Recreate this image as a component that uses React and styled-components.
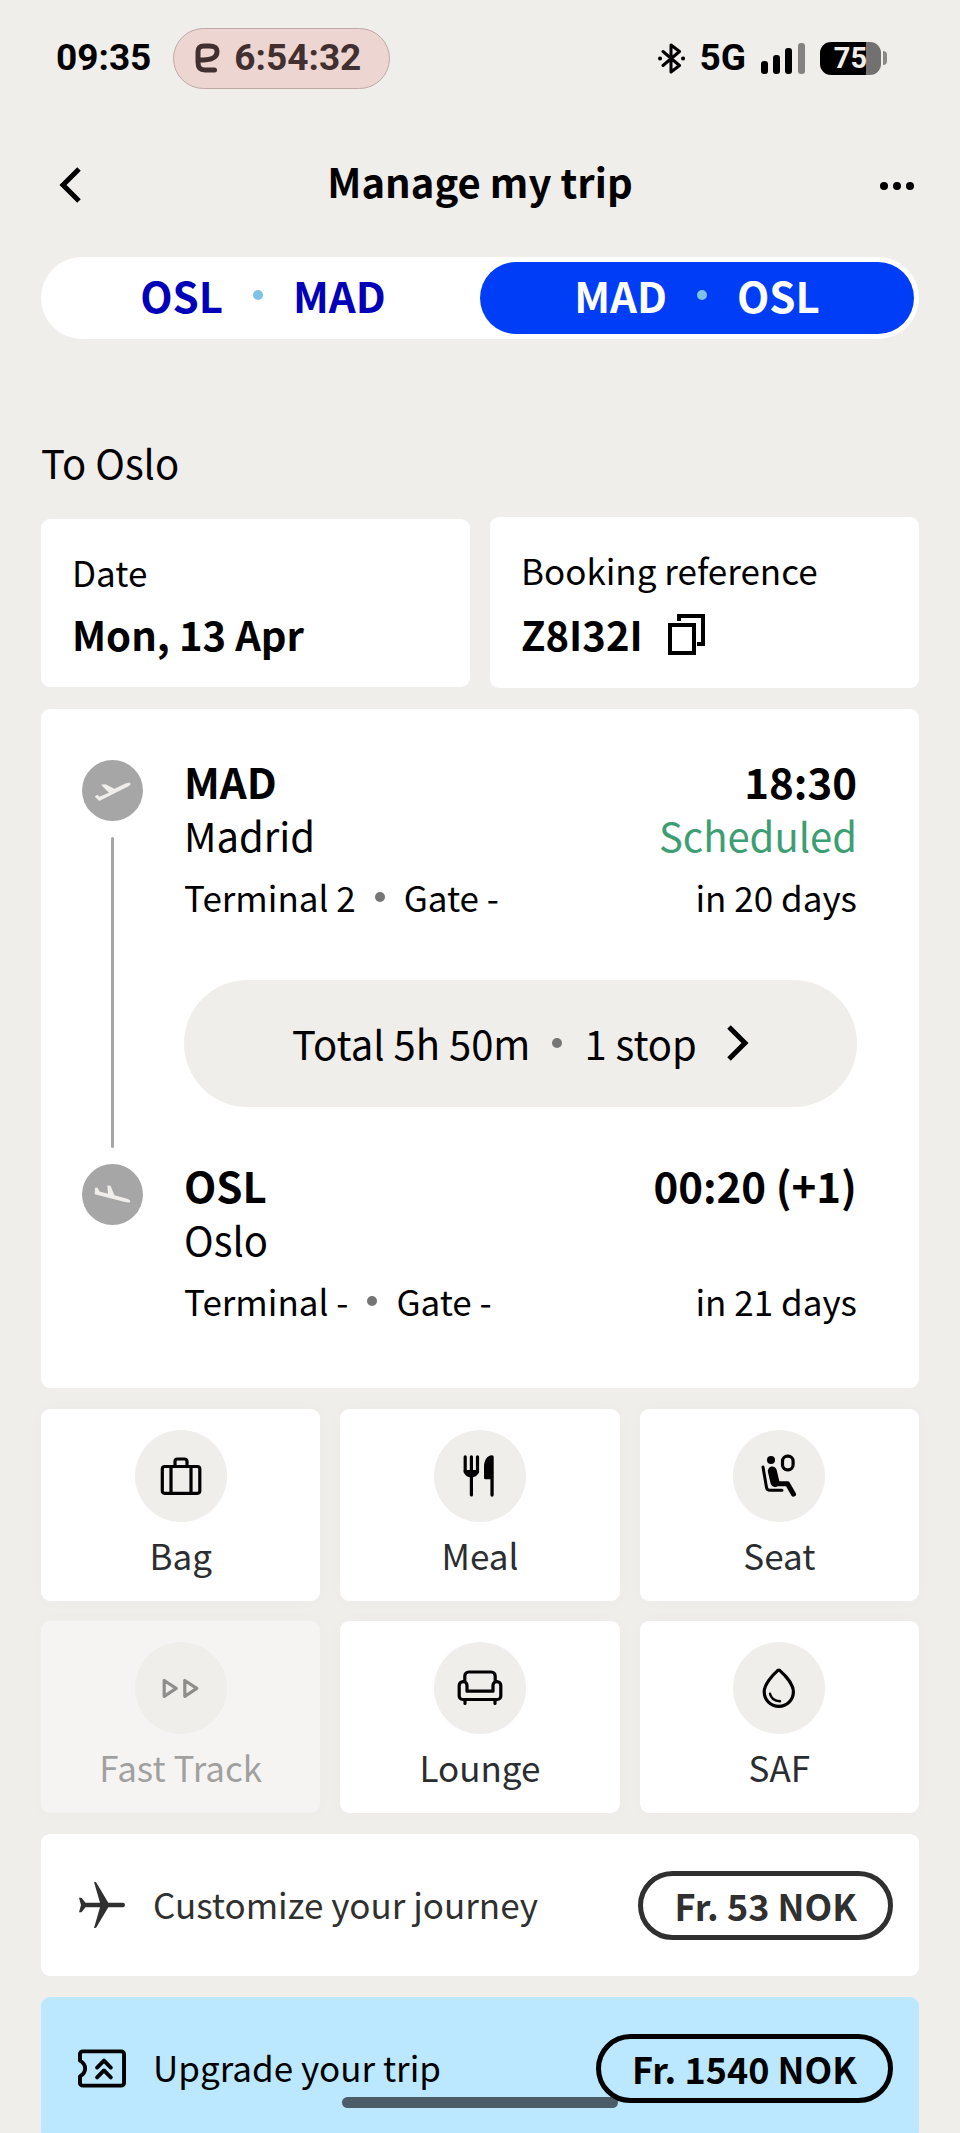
import React, { useState } from "react"
import styled, { createGlobalStyle, css } from "styled-components"

const GlobalStyle = createGlobalStyle`
  *, *::before, *::after {
    box-sizing: border-box;
  }

  body {
    margin: 0;
    background: #f0eeeb;
    color: #000;
    font-family: "Noto Sans CJK SC", "Noto Sans", sans-serif;
    font-size: 35px;
    line-height: 48px;
  }

  h1, h2, p, dl, dd {
    margin: 0;
  }

  button {
    border: 0;
    padding: 0;
    background: none;
    color: inherit;
    font: inherit;
    cursor: pointer;
  }

  svg {
    display: block;
    flex: none;
  }
`

const tiles = [
  { label: "Bag", icon: BagIcon },
  { label: "Meal", icon: MealIcon },
  { label: "Seat", icon: SeatIcon },
  { label: "Fast Track", icon: FastTrackIcon, disabled: true },
  { label: "Lounge", icon: LoungeIcon },
  { label: "SAF", icon: DropIcon },
]

const legs = [
  { from: "OSL", to: "MAD" },
  { from: "MAD", to: "OSL" },
]

const App = () => {
  const [leg, setLeg] = useState(1)

  return (
    <Screen>
      <GlobalStyle />
      <StatusBar />
      <TopBar>
        <IconButton aria-label="Back">
          <svg width="48" height="36" viewBox="0 0 48 36" fill="none" stroke="currentColor" strokeWidth="5">
            <path d="M33 2 17 18l16 16" />
          </svg>
        </IconButton>
        <Title>Manage my trip</Title>
        <IconButton $end aria-label="More">
          <svg width="48" height="36" viewBox="0 0 48 36" fill="currentColor">
            <circle cx="18" cy="19" r="4" />
            <circle cx="31" cy="19" r="4" />
            <circle cx="44" cy="19" r="4" />
          </svg>
        </IconButton>
      </TopBar>

      <Content>
        <Tabs role="tablist">
          {legs.map((item, i) => (
            <Tab
              key={item.from}
              role="tab"
              aria-selected={leg === i}
              $active={leg === i}
              onClick={() => setLeg(i)}
            >
              {item.from}
              <Dot $color="#7dc3e8" />
              {item.to}
            </Tab>
          ))}
        </Tabs>

        <Heading>To Oslo</Heading>

        <Stack>
          <InfoRow>
            <InfoCard>
              <dt>Date</dt>
              <InfoValue>Mon, 13 Apr</InfoValue>
            </InfoCard>
            <InfoCard>
              <dt>Booking reference</dt>
              <InfoValue>
                Z8I32I
                <CopyButton aria-label="Copy booking reference">
                  <svg width="38" height="41" viewBox="0 0 38 41" fill="none" stroke="currentColor" strokeWidth="4">
                    <path d="M2 11h24v28H2z" />
                    <path d="M11 7V2h24v28h-6" />
                  </svg>
                </CopyButton>
              </InfoValue>
            </InfoCard>
          </InfoRow>

          <FlightCard>
            <Timeline>
              <Marker>
                <svg width="61" height="61" viewBox="0 0 61 61" fill="#f0eeeb">
                  <path d="M12.7 36.5 17.3 41 47 26q2.5-2 1-3.2-1.5-.5-4 .5l-11.5 5.4-9-4.5-4.5.5 8 8-9.5 4-2-2z" />
                </svg>
              </Marker>
              <Line />
              <Marker>
                <svg width="61" height="61" viewBox="0 0 61 61" fill="#f0eeeb">
                  <path d="m12.7 30.3.3-6.6 2.5.1 2 3.7 8.5 2.2-.7-8.1 3.2.1 4 9.6L46 35q3 1.5 2 3.3-1 .7-6-.5z" />
                </svg>
              </Marker>
            </Timeline>
            <Stops>
              <Stop
                code="MAD"
                city="Madrid"
                time="18:30"
                status="Scheduled"
                terminal="2"
                days="in 20 days"
              />
              <TotalButton>
                Total 5h 50m
                <Dot $color="#757575" />
                1 stop
                <Chevron width="22" height="36" viewBox="0 0 22 36" fill="none" stroke="currentColor" strokeWidth="5">
                  <path d="m2 2 16 16L2 34" />
                </Chevron>
              </TotalButton>
              <Stop
                code="OSL"
                city="Oslo"
                time="00:20 (+1)"
                terminal="-"
                days="in 21 days"
              />
            </Stops>
          </FlightCard>

          <TileGrid>
            {tiles.map(({ label, icon: Icon, disabled }) => (
              <Tile key={label} disabled={disabled}>
                <TileIcon>
                  <Icon />
                </TileIcon>
                {label}
              </Tile>
            ))}
          </TileGrid>

          <Offer href="#customize">
            <svg width="48" height="46" viewBox="0 0 48 46" fill="currentColor">
              <path d="M16 0h1.2q.8 0 1.2.7L30.3 20.7H44.7a2.3 2.3 0 0 1 0 4.6H30.3L18.4 45.3q-.4.7-1.2.7H16l6-20.7H7.5L3.5 30.3H1L3 23 1 15.7h2.5l4 5H22z" />
            </svg>
            <OfferText>Customize your journey</OfferText>
            <Price>Fr. 53 NOK</Price>
          </Offer>

          <Offer href="#upgrade" $highlight>
            <svg width="48" height="39" viewBox="0 0 49 39" fill="none" stroke="currentColor" strokeWidth="4" strokeLinejoin="round" strokeLinecap="round">
              <path d="M5 2h39a3 3 0 0 1 3 3v29a3 3 0 0 1-3 3H5a3 3 0 0 1-3-3v-6.500c7-4 7-12 0-16V5a3 3 0 0 1 3-3Z" />
              <path d="m19.5 18.500 7-7 7 7M19.5 28.500l7-7 7 7" />
            </svg>
            <OfferText>Upgrade your trip</OfferText>
            <Price>Fr. 1540 NOK</Price>
          </Offer>
        </Stack>
      </Content>
      <HomeIndicator />
    </Screen>
  )
}

const StatusBar = () => (
  <Status>
    <time>09:35</time>
    <Timer>
      <svg width="25" height="30" viewBox="0 0 25 30" fill="none" stroke="currentColor" strokeWidth="5" strokeLinecap="round">
        <path d="M4 17c5 0 10 0 13-1.5 4-1.5 5-4 5-7C22 4 19 3 14 3H9C4.5 3 3 5 3 9v10c0 5.5 2 8 7 8h9.5" />
      </svg>
      6:54:32
    </Timer>
    <StatusRight>
      <svg width="27" height="31" viewBox="0 0 27 31" fill="none" stroke="currentColor" strokeWidth="3" strokeLinejoin="round" strokeLinecap="round">
        <path d="m5 8.5 16.5 14L13 29V2l8.5 6.500-16.5 14" />
        <path d="M2 15.500h.1M25 15.500h.1" strokeWidth="4" />
      </svg>
      <span>5G</span>
      <svg width="44" height="31" viewBox="0 0 44 31" fill="currentColor">
        <rect x="0" y="18" width="7" height="13" rx="3" />
        <rect x="12" y="12" width="7" height="19" rx="3" />
        <rect x="24" y="5" width="7" height="26" rx="3" />
        <rect x="37" y="0" width="7" height="31" rx="3" opacity=".45" />
      </svg>
      <BatteryWrapper>
        <Battery>75</Battery>
        <BatteryTip />
      </BatteryWrapper>
    </StatusRight>
  </Status>
)

const Stop = ({ code, city, time, status, terminal, days }) => (
  <section>
    <StopRow $bold>
      <span>{code}</span>
      <time>{time}</time>
    </StopRow>
    <StopRow>
      <span>{city}</span>
      {status && <StopStatus>{status}</StopStatus>}
    </StopRow>
    <StopDetails>
      <span>Terminal {terminal}</span>
      <Dot $color="#757575" />
      <span>Gate -</span>
      <Days>{days}</Days>
    </StopDetails>
  </section>
)

function TileSvg({ children }) {
  return (
    <svg width="92" height="92" viewBox="0 0 92 92" fill="none" stroke="#000" strokeWidth="3.2" strokeLinecap="round" strokeLinejoin="round">
      {children}
    </svg>
  )
}

function BagIcon() {
  return (
    <TileSvg>
      <rect x="27.3" y="36.5" width="37.5" height="26.8" rx="2.5" />
      <path d="M36 37v26M56 37v26M40 36v-4.500a2.5 2.5 0 0 1 2.5-2.500h7a2.5 2.5 0 0 1 2.5 2.500V36" />
    </TileSvg>
  )
}

function MealIcon() {
  return (
    <TileSvg>
      <path d="M31.2 26.8V42M37.4 26.8V65M43.5 26.8V42" />
      <g fill="#000" stroke="none">
        <path d="M29.7 40H45c0 4.5-3 7.3-7.7 7.3S29.7 44.5 29.7 40Z" />
        <path d="M59.7 27v38a1.6 1.6 0 0 1-3.3 0V49.3h-4.9a1.5 1.5 0 0 1-1.5-1.500V37c0-6.5 3-11.7 8-11.7a1.7 1.7 0 0 1 1.7 1.7Z" />
      </g>
    </TileSvg>
  )
}

function SeatIcon() {
  return (
    <TileSvg>
      <circle cx="38" cy="30" r="4" fill="#000" stroke="none" />
      <path d="m30 37 3.5 20.500q.5 2.8 3.5 2.800h12" strokeWidth="3" />
      <path d="m39.3 41 2.7 11.500" strokeWidth="9" />
      <path d="M42 53.700h12.500l6 10.500" strokeWidth="5" />
      <rect x="49.5" y="26.2" width="10.6" height="13.6" rx="5" />
    </TileSvg>
  )
}

function FastTrackIcon() {
  return (
    <TileSvg>
      <path d="M29.2 38.5v15.8l12-7.9zM49.8 38.5v15.8l12-7.9z" />
    </TileSvg>
  )
}

function LoungeIcon() {
  return (
    <TileSvg>
      <path d="M30.8 39v-5a4 4 0 0 1 4-4h22.4a4 4 0 0 1 4 4v5M31 58v3.5M61 58v3.5" />
      <path d="M33 49.2h26v-5.7a3.9 3.9 0 0 1 7.8 0V54a3.5 3.5 0 0 1-3.5 3.500H28.7a3.5 3.5 0 0 1-3.5-3.500V43.5a3.9 3.9 0 0 1 7.8 0Z" />
    </TileSvg>
  )
}

function DropIcon() {
  return (
    <TileSvg>
      <path d="M44.6 28.6C39 33.5 31.2 42.5 31.2 49.8a14.6 14.6 0 0 0 29.2 0C60.4 42.5 52.5 33.5 46.9 28.6a1.8 1.8 0 0 0-2.3 0Z" />
      <path d="M37 51.7q1.5 7 10 7.6" strokeWidth="2.4" />
    </TileSvg>
  )
}

const Screen = styled.div`
  position: relative;
  height: 100vh;
  overflow: hidden;
  display: flex;
  flex-direction: column;
`

const Status = styled.div`
  display: flex;
  align-items: center;
  flex: none;
  height: 116px;
  padding: 0 73px 0 56px;
  font-family: Roboto, sans-serif;
  font-size: 37px;
  font-weight: 700;
`

const Timer = styled.div`
  display: flex;
  align-items: center;
  gap: 14px;
  height: 61px;
  margin-left: 22px;
  padding: 0 28px 0 21px;
  border: 1px solid #bfa9a7;
  border-radius: 31px;
  background: #edd5d1;
  color: #41302f;
`

const StatusRight = styled.div`
  display: flex;
  align-items: center;
  gap: 15px;
  margin-left: auto;
`

const BatteryWrapper = styled.div`
  display: flex;
  align-items: center;
  gap: 2px;
`

const Battery = styled.div`
  width: 61px;
  height: 33px;
  border-radius: 11px;
  background: linear-gradient(to right, #000 75%, #727170 75%);
  color: #f0eeeb;
  font-size: 29px;
  line-height: 33px;
  text-align: center;
`

const BatteryTip = styled.div`
  width: 4px;
  height: 14px;
  border-radius: 0 4px 4px 0;
  background: #8a8987;
`

const TopBar = styled.header`
  display: grid;
  grid-template-columns: 1fr auto 1fr;
  align-items: center;
  flex: none;
  margin: 38px 46px 0;
`

const Title = styled.h1`
  font-size: 40px;
  line-height: 54px;
  font-weight: 700;
`

const IconButton = styled.button`
  justify-self: ${p => (p.$end ? "end" : "start")};
  padding-top: 8px;
`

const Content = styled.main`
  flex: 1;
  min-height: 0;
  margin-top: 49px;
  padding: 0 41px;
  overflow: hidden;
`

const Tabs = styled.div`
  display: grid;
  grid-template-columns: 1fr 1fr;
  height: 82px;
  padding: 5px;
  border-radius: 41px;
  background: #fff;
`

const Dot = styled.span`
  flex: none;
  width: 10px;
  height: 10px;
  border-radius: 50%;
  background: ${p => p.$color};
`

const Tab = styled.button`
  display: flex;
  align-items: center;
  justify-content: center;
  gap: 30px;
  padding-bottom: 6px;
  border-radius: 36px;
  font-size: 42px;
  font-weight: 700;
  color: #0000b8;

  ${p => p.$active && css`
    background: #003df6;
    color: #fff;
  `}
`

const Heading = styled.h2`
  margin: 96px 0 28px;
  font-size: 40px;
  line-height: 54px;
  font-weight: 400;
`

const Stack = styled.div`
  display: flex;
  flex-direction: column;
  gap: 21px;
`

const card = css`
  border-radius: 9px;
  background: #fff;
`

const InfoRow = styled.div`
  display: grid;
  grid-template-columns: 1fr 1fr;
  align-items: center;
  gap: 20px;
`

const InfoCard = styled.dl`
  ${card}
  padding: 29px 30px 26px 31px;
`

const InfoValue = styled.dd`
  display: flex;
  align-items: center;
  gap: 25px;
  padding-top: 11px;
  font-size: 40px;
  line-height: 54px;
  font-weight: 700;
`

const CopyButton = styled.button`
  padding: 9px 0 7px;
`

const FlightCard = styled.article`
  ${card}
  display: flex;
  gap: 41px;
  padding: 45px 62px 63px 41px;
`

const Timeline = styled.div`
  display: flex;
  flex-direction: column;
  align-items: center;
  gap: 16px;
  padding: 6px 0 100px;
`

const Marker = styled.div`
  border-radius: 50%;
  background: #a6a6a6;
`

const Line = styled.div`
  flex: 1;
  width: 3px;
  border-radius: 2px;
  background: #a6a6a6;
`

const Stops = styled.div`
  flex: 1;
`

const StopRow = styled.div`
  display: flex;
  justify-content: space-between;
  font-size: ${p => (p.$bold ? 42 : 40)}px;
  line-height: 54px;
  font-weight: ${p => (p.$bold ? 700 : 400)};
`

const StopStatus = styled.span`
  color: #3d9e74;
`

const StopDetails = styled.div`
  display: flex;
  align-items: center;
  gap: 19px;
  margin-top: 11px;
`

const Days = styled.span`
  margin-left: auto;
`

const TotalButton = styled.button`
  display: flex;
  align-items: center;
  justify-content: center;
  gap: 22px;
  width: 100%;
  height: 127px;
  margin: 59px 0 51px;
  padding-bottom: 2px;
  border-radius: 64px;
  background: #f0eeeb;
  font-size: 40px;
`

const Chevron = styled.svg`
  margin-left: 8px;
`

const TileGrid = styled.div`
  display: grid;
  grid-template-columns: repeat(3, 1fr);
  gap: 20px;
`

const Tile = styled.button`
  ${card}
  display: flex;
  flex-direction: column;
  align-items: center;
  gap: 9px;
  height: 192px;
  padding-top: 21px;
  color: #2b2d30;
  box-shadow: 0 0 20px rgba(0, 0, 0, 0.02);

  &:disabled {
    opacity: 0.4;
    cursor: default;
  }
`

const TileIcon = styled.span`
  border-radius: 50%;
  background: #f0eeeb;
`

const Offer = styled.a`
  ${card}
  display: flex;
  align-items: center;
  height: 142px;
  padding: 0 26px 0 37px;
  color: #303030;
  text-decoration: none;

  ${p => p.$highlight && css`
    background: #bbe8ff;
    color: #000;
  `}
`

const OfferText = styled.span`
  flex: 1;
  margin-left: 27px;
  padding-bottom: 2px;
`

const Price = styled.span`
  padding: 5px 31px 6px;
  border: 5px solid currentColor;
  border-radius: 35px;
  font-size: 36px;
  font-weight: 700;
`

const HomeIndicator = styled.div`
  position: absolute;
  bottom: 25px;
  left: 50%;
  width: 276px;
  height: 11px;
  margin-left: -138px;
  border-radius: 6px;
  background: rgba(0, 0, 0, 0.6);
`

export default App
